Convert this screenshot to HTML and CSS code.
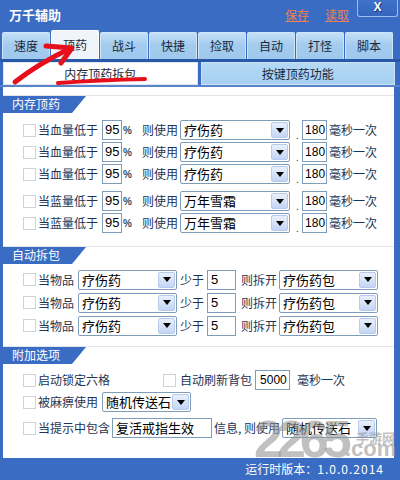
FILE: index.html
```html
<!DOCTYPE html>
<html lang="zh-CN">
<head>
  <meta charset="UTF-8">
  <title>万千辅助</title>
  <link rel="stylesheet" href="styles.css">
</head>
<body>
  <div class="window">
    <div class="titlebar">
      <span class="title">万千辅助</span>
      <div class="links">
        <a href="#">保存</a>
        <a href="#">读取</a>
      </div>
      <div class="close">X</div>
    </div>

    <div class="tabs">
      <div class="tab">速度</div>
      <div class="tab active">顶药</div>
      <div class="tab">战斗</div>
      <div class="tab">快捷</div>
      <div class="tab">捡取</div>
      <div class="tab">自动</div>
      <div class="tab">打怪</div>
      <div class="tab">脚本</div>
    </div>

    <div class="subtabs">
      <div class="subtab active">内存顶药拆包</div>
      <div class="subtab">按键顶药功能</div>
    </div>

    <div class="panel">
      <!-- 内存顶药 -->
      <div class="sec-head"><span>内存顶药</span></div>
      <div class="group g1">
        <div class="row">
          <span class="cb"></span><span class="lbl">当血量低于</span>
          <span class="edit pct-in">95</span><span class="pct">%</span>
          <span class="lbl use">则使用</span>
          <div class="combo w110"><span class="val">疗伤药</span><span class="btn"></span></div>
          <span class="dot">.</span>
          <span class="edit ms-in">180</span><span class="lbl after">毫秒一次</span>
        </div>
        <div class="row">
          <span class="cb"></span><span class="lbl">当血量低于</span>
          <span class="edit pct-in">95</span><span class="pct">%</span>
          <span class="lbl use">则使用</span>
          <div class="combo w110"><span class="val">疗伤药</span><span class="btn"></span></div>
          <span class="dot">.</span>
          <span class="edit ms-in">180</span><span class="lbl after">毫秒一次</span>
        </div>
        <div class="row">
          <span class="cb"></span><span class="lbl">当血量低于</span>
          <span class="edit pct-in">95</span><span class="pct">%</span>
          <span class="lbl use">则使用</span>
          <div class="combo w110"><span class="val">疗伤药</span><span class="btn"></span></div>
          <span class="dot">.</span>
          <span class="edit ms-in">180</span><span class="lbl after">毫秒一次</span>
        </div>
        <div class="row gap-top">
          <span class="cb"></span><span class="lbl">当蓝量低于</span>
          <span class="edit pct-in">95</span><span class="pct">%</span>
          <span class="lbl use">则使用</span>
          <div class="combo w110"><span class="val">万年雪霜</span><span class="btn"></span></div>
          <span class="dot">.</span>
          <span class="edit ms-in">180</span><span class="lbl after">毫秒一次</span>
        </div>
        <div class="row">
          <span class="cb"></span><span class="lbl">当蓝量低于</span>
          <span class="edit pct-in">95</span><span class="pct">%</span>
          <span class="lbl use">则使用</span>
          <div class="combo w110"><span class="val">万年雪霜</span><span class="btn"></span></div>
          <span class="dot">.</span>
          <span class="edit ms-in">180</span><span class="lbl after">毫秒一次</span>
        </div>
      </div>

      <!-- 自动拆包 -->
      <div class="sec-head"><span>自动拆包</span></div>
      <div class="group g2">
        <div class="row tall">
          <span class="cb"></span><span class="lbl">当物品</span>
          <div class="combo w99 item"><span class="val">疗伤药</span><span class="btn"></span></div>
          <span class="lbl less">少于</span>
          <span class="edit cnt-in">5</span>
          <span class="lbl open">则拆开</span>
          <div class="combo w99 pack"><span class="val">疗伤药包</span><span class="btn"></span></div>
        </div>
        <div class="row tall">
          <span class="cb"></span><span class="lbl">当物品</span>
          <div class="combo w99 item"><span class="val">疗伤药</span><span class="btn"></span></div>
          <span class="lbl less">少于</span>
          <span class="edit cnt-in">5</span>
          <span class="lbl open">则拆开</span>
          <div class="combo w99 pack"><span class="val">疗伤药包</span><span class="btn"></span></div>
        </div>
        <div class="row tall">
          <span class="cb"></span><span class="lbl">当物品</span>
          <div class="combo w99 item"><span class="val">疗伤药</span><span class="btn"></span></div>
          <span class="lbl less">少于</span>
          <span class="edit cnt-in">5</span>
          <span class="lbl open">则拆开</span>
          <div class="combo w99 pack"><span class="val">疗伤药包</span><span class="btn"></span></div>
        </div>
      </div>

      <!-- 附加选项 -->
      <div class="sec-head"><span>附加选项</span></div>
      <div class="group g3">
        <div class="row">
          <span class="cb"></span><span class="lbl">启动锁定六格</span>
          <span class="cb second"></span><span class="lbl refresh">自动刷新背包</span>
          <span class="edit bag-in">5000</span><span class="lbl bag-after">毫秒一次</span>
        </div>
        <div class="row">
          <span class="cb"></span><span class="lbl">被麻痹使用</span>
          <div class="combo w89 stone"><span class="val">随机传送石</span><span class="btn"></span></div>
        </div>
        <div class="row gap-top2">
          <span class="cb"></span><span class="lbl">当提示中包含</span>
          <span class="edit text-in">复活戒指生效</span>
          <span class="lbl info">信息, 则使用</span>
          <div class="combo w95 stone2"><span class="val">随机传送石</span><span class="btn"></span></div>
        </div>
      </div>
    </div>

    <div class="status">运行时版本：<span class="ver">1.0.0.2014</span></div>

    <div class="watermark">
      <span class="wm-num">2265</span>
      <span class="wm-com">.com</span>
      <span class="wm-cn">手游网</span>
    </div>

    <svg class="scribble" width="400" height="480" viewBox="0 0 400 480">
      <path d="M15 82 Q38 64 69 49" />
      <path d="M46 46 L72 48 L61 63" />
      <path d="M58 83 Q100 80 145 79" class="under" />
    </svg>
  </div>
</body>
</html>
```

FILE: styles.css
```css
body {
  margin: 0;
  font-family: "Noto Sans CJK SC", "Noto Sans", sans-serif;
  font-size: 12px;
}
.window {
  position: relative;
  width: 400px;
  height: 480px;
  background: #3a6cc4;
  display: flex;
  flex-direction: column;
  overflow: hidden;
}

/* title bar */
.titlebar {
  height: 30px;
  display: flex;
  align-items: flex-start;
}
.title {
  color: #fff;
  font-weight: bold;
  font-size: 13px;
  line-height: 17px;
  margin: 6px 0 0 9px;
}
.links {
  margin: 6px 0 0 auto;
  display: flex;
  gap: 16px;
}
.links a {
  color: #f0804c;
  line-height: 17px;
  text-decoration: underline;
}
.close {
  width: 41px;
  height: 17px;
  margin: 0 2px 0 8px;
  box-sizing: border-box;
  border: 1px solid #9fbdf0;
  border-top: none;
  border-radius: 0 0 3px 3px;
  background: linear-gradient(#3f72ca, #3566bc);
  color: #fff;
  font-family: "Liberation Sans", sans-serif;
  font-weight: bold;
  font-size: 12px;
  line-height: 15px;
  text-align: center;
  text-shadow: 0 0 1px #1a3a80, 1px 1px 0 #1a3a80;
}

/* main tabs */
.tabs {
  height: 29px;
  display: flex;
  align-items: flex-end;
  gap: 1px;
  padding-left: 2px;
}
.tab {
  width: 48px;
  height: 27px;
  box-sizing: border-box;
  border: 1px solid #cfe6f8;
  border-bottom: none;
  border-radius: 2px 2px 0 0;
  background: linear-gradient(#c4e0f7, #a4ccee 45%, #9ec8ed);
  color: #18283c;
  text-align: center;
  line-height: 25px;
}
.tab.active {
  height: 29px;
  border-color: #fff;
  background: #eef4fa;
  line-height: 28px;
}

/* sub tabs */
.subtabs {
  height: 23px;
  display: flex;
  gap: 3px;
  padding: 0 5px 0 3px;
  border-top: 3px solid #2858a8;
  border-bottom: 2px solid #5a84c8;
}
.subtab {
  flex: 1;
  box-sizing: border-box;
  border: 1px solid #c8e2f6;
  background: linear-gradient(#b4d9f5, #a6d0f1);
  color: #18283c;
  text-align: center;
  line-height: 21px;
}
.subtab.active {
  border-color: #dfe8f2;
  background: #fff;
}

/* content panel */
.panel {
  flex: 1;
  background: #fff;
  margin: 0 6px 0 3px;
  padding-top: 8px;
}
.sec-head {
  height: 17px;
  border-top: 1px solid #e2e6ec;
}
.sec-head span {
  display: block;
  width: 83px;
  height: 17px;
  box-sizing: border-box;
  padding-left: 9px;
  background: #3a6cc4;
  clip-path: polygon(0 0, 100% 0, 69px 100%, 0 100%);
  color: #fff;
  line-height: 16px;
}
.group.g1 { margin: 6px 0 12px; }
.group.g2 { margin: 4px 0 9px; }
.group.g3 { margin: 5px 0 0; }

.row {
  display: flex;
  align-items: center;
  height: 22px;
  padding-left: 20px;
  color: #1e3452;
}
.row.tall { height: 23px; }
.row.gap-top { margin-top: 5px; }
.row.gap-top2 { margin-top: 4px; }

.cb {
  width: 13px;
  height: 13px;
  box-sizing: border-box;
  border: 1px solid #ccd3da;
  background: #fff;
}
.lbl {
  margin-left: 2px;
  line-height: 16px;
  white-space: nowrap;
}
.edit {
  height: 20px;
  box-sizing: border-box;
  border: 1px solid #7f9db9;
  background: #fff;
  color: #000;
  font-family: "Liberation Sans", sans-serif;
  font-size: 13px;
  line-height: 18px;
  padding-left: 3px;
  overflow: hidden;
  white-space: nowrap;
}
.pct-in { width: 20px; margin-left: 4px; padding-left: 2px; }
.pct {
  width: 8px;
  margin-left: 1px;
  font-family: "Liberation Sans", sans-serif;
  font-size: 10px;
  font-weight: bold;
  color: #3a4a66;
}
.lbl.use { margin-left: 11px; }
.dot {
  margin: 8px 0 0 6px;
  width: 3px;
  font-size: 10px;
  color: #445;
}
.ms-in { width: 25px; margin-left: 3px; padding-left: 2px; font-size: 12px; }
.lbl.after { margin-left: 2px; }

.combo {
  height: 20px;
  box-sizing: border-box;
  border: 1px solid #7f9db9;
  border-radius: 2px;
  background: #fff;
  display: flex;
  align-items: center;
  color: #000;
  font-size: 13px;
}
.combo .val {
  flex: 1;
  padding-left: 3px;
  line-height: 18px;
  white-space: nowrap;
  overflow: hidden;
}
.combo .btn {
  width: 17px;
  height: 16px;
  margin-right: 1px;
  box-sizing: border-box;
  border: 1px solid #b9cbea;
  border-radius: 2px;
  background: linear-gradient(#e9f0fc, #c3d5f5);
  display: flex;
  align-items: center;
  justify-content: center;
}
.combo .btn::after {
  content: "";
  border-left: 4px solid transparent;
  border-right: 4px solid transparent;
  border-top: 5px solid #000;
}
.w110 { width: 110px; margin-left: 2px; }
.w99 { width: 99px; }
.w89 { width: 89px; }
.w95 { width: 95px; }
.combo.item { margin-left: 4px; }
.lbl.less { margin-left: 3px; }
.cnt-in { width: 29px; margin-left: 3px; }
.lbl.open { margin-left: 5px; }
.combo.pack { margin-left: 2px; }

.cb.second { margin-left: 53px; }
.lbl.refresh { margin-left: 4px; }
.bag-in { width: 35px; margin-left: 3px; padding-left: 4px; font-size: 12px; }
.lbl.bag-after { margin-left: 7px; }
.combo.stone { margin-left: 4px; }
.text-in {
  width: 100px;
  margin-left: 2px;
  font-family: "Noto Sans CJK SC", sans-serif;
  font-size: 13px;
}
.lbl.info { margin-left: 2px; }
.combo.stone2 { margin-left: 2px; }

/* status bar */
.status {
  height: 22px;
  padding-right: 16px;
  text-align: right;
  color: #fff;
  line-height: 22px;
}
.ver { letter-spacing: 1px; }

/* overlays */
.watermark {
  position: absolute;
  left: 252px;
  top: 400px;
  width: 148px;
  height: 58px;
  color: rgba(150, 150, 150, 0.6);
  font-family: "Liberation Sans", sans-serif;
  font-weight: bold;
  pointer-events: none;
}
.wm-num {
  position: absolute;
  left: 2px;
  top: 20px;
  font-size: 52px;
  line-height: 38px;
  letter-spacing: -6px;
}
.wm-com {
  position: absolute;
  left: 93px;
  top: 41px;
  font-size: 22px;
  line-height: 16px;
}
.wm-cn {
  position: absolute;
  left: 104px;
  top: 31px;
  font-family: "Noto Sans CJK SC", sans-serif;
  font-size: 13px;
  line-height: 14px;
}
.scribble {
  position: absolute;
  left: 0;
  top: 0;
  pointer-events: none;
}
.scribble path {
  fill: none;
  stroke: #e6101c;
  stroke-width: 5;
  stroke-linecap: round;
  stroke-linejoin: round;
}
.scribble path.under { stroke-width: 4; }
```
